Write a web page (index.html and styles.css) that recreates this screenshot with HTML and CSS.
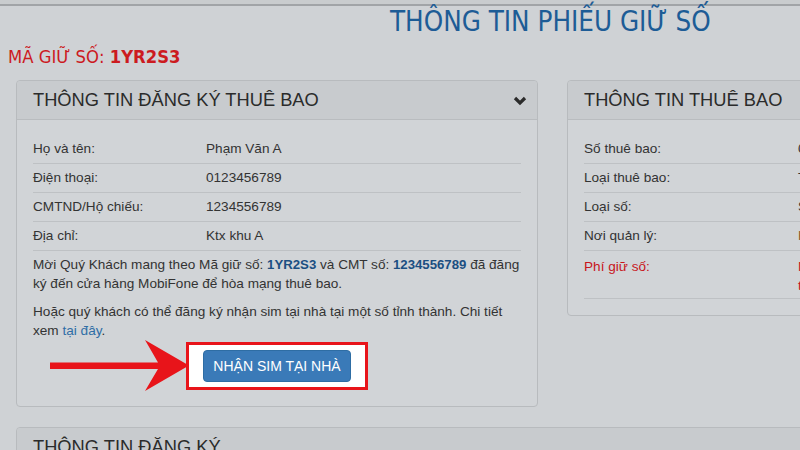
FILE: index.html
```html
<!DOCTYPE html>
<html lang="vi">
<head>
    <meta charset="UTF-8">
    <title>Thông tin phiếu giữ số</title>
    <link rel="stylesheet" href="styles.css">
</head>
<body>
    <div class="topbar"></div>
    <h1 class="page-title">THÔNG TIN PHIẾU GIỮ SỐ</h1>
    <div class="ma-giu">MÃ GIỮ SỐ: <b>1YR2S3</b></div>

    <div class="cols">
        <div class="panel panel-left">
            <div class="panel-head">
                THÔNG TIN ĐĂNG KÝ THUÊ BAO
                <svg class="chevron" width="14" height="10" viewBox="0 0 14 10"><polyline points="2,2 7,7 12,2" fill="none" stroke="#2b2b2b" stroke-width="3.2"/></svg>
            </div>
            <div class="panel-body">
                <table class="info">
                    <tr><td class="lbl">Họ và tên:</td><td>Phạm Văn A</td></tr>
                    <tr><td class="lbl">Điện thoại:</td><td>0123456789</td></tr>
                    <tr><td class="lbl">CMTND/Hộ chiếu:</td><td>1234556789</td></tr>
                    <tr><td class="lbl">Địa chỉ:</td><td>Ktx khu A</td></tr>
                </table>
                <p>Mời Quý Khách mang theo Mã giữ số: <b>1YR2S3</b> và CMT số: <b>1234556789</b> đã đăng ký đến cửa hàng MobiFone để hòa mạng thuê bao.</p>
                <p>Hoặc quý khách có thể đăng ký nhận sim tại nhà tại một số tỉnh thành. Chi tiết xem <a href="#">tại đây</a>.</p>
                <div class="btn-row">
                    <div class="highlight"><button class="btn">NHẬN SIM TẠI NHÀ</button></div>
                </div>
            </div>
        </div>

        <div class="panel panel-right">
            <div class="panel-head">THÔNG TIN THUÊ BAO</div>
            <div class="panel-body">
                <table class="info info-right">
                    <tr><td class="lbl">Số thuê bao:</td><td>0901234567</td></tr>
                    <tr><td class="lbl">Loại thuê bao:</td><td>Trả trước</td></tr>
                    <tr><td class="lbl">Loại số:</td><td>Số thường</td></tr>
                    <tr><td class="lbl">Nơi quản lý:</td><td class="brown">Khu vực 1</td></tr>
                    <tr class="fee"><td class="lbl">Phí giữ số:</td><td>Miễn phí giữ số<br>trong 48 giờ</td></tr>
                </table>
            </div>
        </div>
    </div>

    <div class="panel panel-wide">
        <div class="panel-head">THÔNG TIN ĐĂNG KÝ</div>
    </div>

    <svg class="arrow" width="200" height="70" viewBox="0 0 200 70">
        <path d="M50 22.5 L158 22.5 Q152 12 145 0 L189 25.5 L145 51 Q152 39 158 29 L50 29 Z" fill="#e8141a"/>
    </svg>
</body>
</html>
```

FILE: styles.css
```css
*{margin:0;padding:0;box-sizing:border-box;}
body{
    width:800px;
    height:450px;
    overflow:hidden;
    position:relative;
    background:#cfd2d5;
    font-family:"Liberation Sans", Arial, sans-serif;
    font-size:13.6px;
    color:#333;
}
.topbar{height:6px;border-bottom:2px solid #a1a4a7;background:#c9ccce;}
.page-title{
    margin-left:390px;
    font-family:"DejaVu Sans Condensed", "Liberation Sans", sans-serif;
    font-weight:normal;
    font-size:27.5px;
    line-height:30px;
    color:#1d5c96;
    white-space:nowrap;
}
.ma-giu{
    margin:10px 0 12px 8px;
    font-family:"DejaVu Sans Condensed", "Liberation Sans", sans-serif;
    font-size:18.3px;
    line-height:22px;
    color:#cc1b1f;
}

.cols{display:flex;gap:29px;padding-left:16px;align-items:flex-start;}
.panel{
    background:#d1d4d7;
    border:1px solid #b8bbbe;
    border-radius:4px;
    flex-shrink:0;
}
.panel-left{width:522px;}
.panel-right{width:520px;}
.panel-head{
    position:relative;
    height:39px;
    line-height:38px;
    padding:0 16px;
    background:#c8cbce;
    border-bottom:1px solid #b9bcbf;
    border-radius:4px 4px 0 0;
    font-size:18.3px;
    color:#2b2b2b;
    white-space:nowrap;
}
.chevron{position:absolute;right:10px;top:15px;}
.panel-body{padding:14px 16px 16px;}

.info{width:100%;border-collapse:collapse;}
.info td{height:29px;border-bottom:1px solid #bec1c4;vertical-align:middle;padding:0;white-space:nowrap;}
.info td.lbl{width:173px;}
.info-right td.lbl{width:214px;}
.info-right .brown{color:#8a5a2b;}
.info-right .fee td{height:48px;vertical-align:top;padding-top:6px;line-height:19px;color:#c8151b;}

.panel-body p{line-height:19px;margin-top:4px;}
.panel-body p + p{margin-top:9px;}
.panel-body p b{color:#1b4f82;font-size:13.2px;}
.panel-body a{color:#2f6ea6;text-decoration:none;}

.btn-row{display:flex;justify-content:center;margin-top:2px;}
.highlight{border:3px solid #e8141a;background:#fff;padding:5px 14px;}
.btn{
    display:block;
    width:148px;
    height:32px;
    background:#3a7ab8;
    border:1px solid #2e6da4;
    border-radius:4px;
    color:#fff;
    font-family:"Liberation Sans", Arial, sans-serif;
    font-size:14px;
}

.panel-wide{width:900px;margin:20px 0 0 16px;}

.arrow{position:absolute;left:0;top:340px;}
```
